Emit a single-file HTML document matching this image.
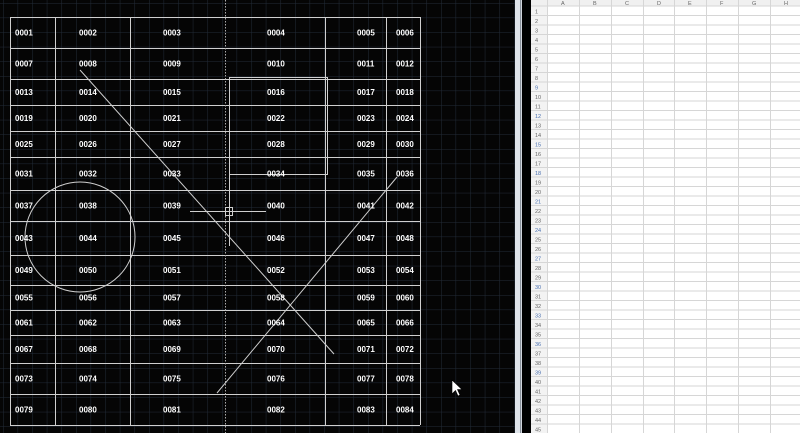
<!DOCTYPE html>
<html><head><style>
html,body{margin:0;padding:0;background:#000;width:800px;height:433px;overflow:hidden}
svg{position:absolute;left:0;top:0}
</style></head><body>
<svg id="s" width="800" height="433" xmlns="http://www.w3.org/2000/svg" font-family="Liberation Sans, sans-serif">
<defs>
<pattern id="g" width="14.6" height="14.6" patternUnits="userSpaceOnUse" x="3" y="3">
<path d="M0 0H14.6M0 0V14.6" stroke="#222b38" stroke-width="1" fill="none"/>
</pattern>
</defs>
<rect width="515" height="433" fill="#050505"/>
<rect width="515" height="433" fill="url(#g)"/>
<g id="cad" stroke="#cfcfcf" stroke-width="1" fill="none"></g>
<g id="txt" fill="#fff" font-size="8" font-weight="bold"></g>
<path d="M452 380 L452 394 L455.5 390.5 L458 396 L460 395 L457.5 389.5 L462 389.5 Z" fill="#fff" stroke="#000" stroke-width="0.6"/>
<rect x="515" y="0" width="5" height="433" fill="#dfe4ea"/>
<rect x="520" y="0" width="1" height="433" fill="#8a929c"/>
<rect x="521" y="0" width="1" height="433" fill="#d0d5dc"/>
<rect x="522" y="0" width="9" height="433" fill="#000"/>
<rect x="531" y="0" width="269" height="433" fill="#fff"/>
<rect x="531" y="0" width="16" height="433" fill="#f3f3f3"/>
<rect x="531" y="0" width="269" height="6" fill="#f0f0f0"/>
<g id="sh" stroke="#d6d6d6" stroke-width="1"></g>
<g id="sht" fill="#666" font-size="5.5"></g>
</svg>
<script>
var NS="http://www.w3.org/2000/svg";
function el(p,t,a,txt){var e=document.createElementNS(NS,t);for(var k in a)e.setAttribute(k,a[k]);if(txt)e.textContent=txt;document.getElementById(p).appendChild(e);return e;}
var rows=[17,48,79,105,131,157,190,221,255,285,310,335,363,394,425];
var cols=[10,55,130,325,386,420];
rows.forEach(function(y){el("cad","line",{x1:10,y1:y+.5,x2:420,y2:y+.5});});
cols.forEach(function(x){el("cad","line",{x1:x+.5,y1:17,x2:x+.5,y2:425});});
el("cad","line",{x1:225.5,y1:0,x2:225.5,y2:433,"stroke-dasharray":"1.5,1.5",stroke:"#aaa"});
el("cad","rect",{x:229.5,y:77.5,width:98,height:97});
el("cad","line",{x1:229.5,y1:174,x2:229.5,y2:246});
el("cad","line",{x1:190,y1:211.5,x2:266,y2:211.5});
el("cad","rect",{x:225.5,y:207.5,width:7,height:8});
el("cad","line",{x1:80,y1:70,x2:334,y2:354});
el("cad","line",{x1:217,y1:393,x2:397,y2:177});
el("cad","circle",{cx:80,cy:237,r:55});
var tx=[15,79,163,267,357,396];
var n=1;
for(var r=0;r<14;r++){var cy=(rows[r]+rows[r+1])/2+3;
for(var c=0;c<6;c++){var s=("000"+n).slice(-4);n++;el("txt","text",{x:tx[c],y:cy},s);}}
var scol=[547,579,611,643,674,706,738,770];
var L="ABCDEFGH";
scol.forEach(function(x,i){el("sh","line",{x1:x+.5,y1:0,x2:x+.5,y2:433});el("sht","text",{x:x+14,y:5},L[i]);});
for(var i=0;i<46;i++){var y=6+i*9.5;el("sh","line",{x1:531,y1:y,x2:800,y2:y});
if(i<45){var t=el("sht","text",{x:535,y:y+7.5},String(i+1));if([9,12,15,18,21,24,27,30,33,36,39].indexOf(i+1)>=0)t.setAttribute("fill","#4a70b0");}}
</script>
</body></html>
